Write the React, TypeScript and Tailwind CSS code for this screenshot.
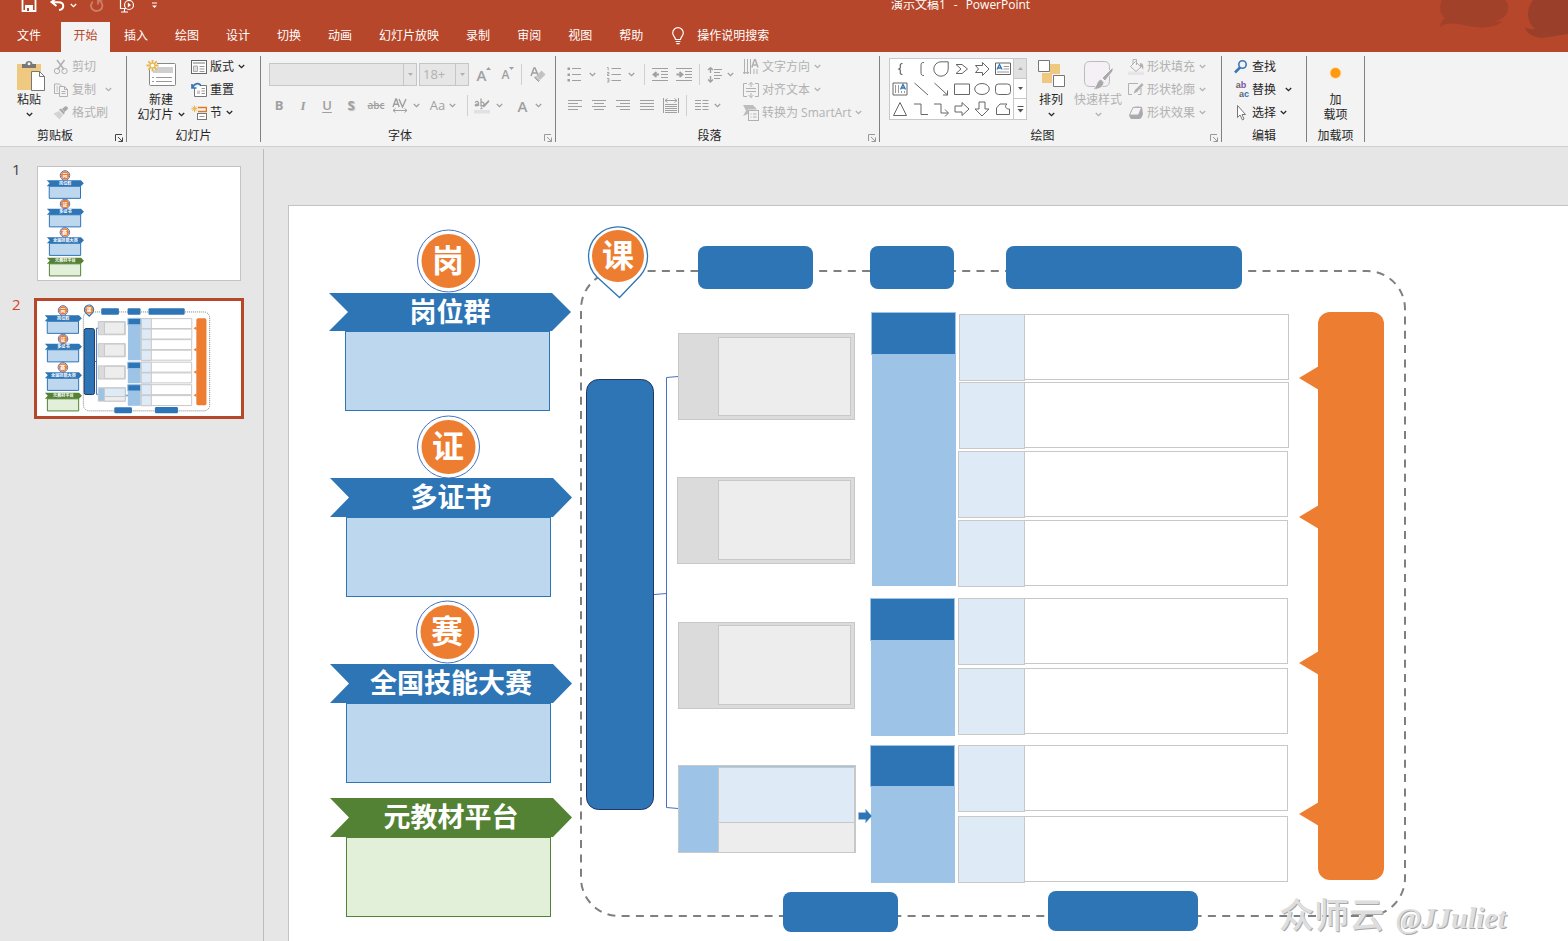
import type { ReactNode } from "react";

type IconProps = { children: ReactNode; size?: string; box?: string; className?: string };

function Icon({ children, size = "w-4 h-4", box = "0 0 16 16", className = "" }: IconProps) {
  return (
    <svg
      viewBox={box}
      className={`${size} shrink-0 ${className}`}
      fill="none"
      stroke="currentColor"
      strokeWidth="1"
      aria-hidden="true"
    >
      {children}
    </svg>
  );
}

function Chevron({ className = "" }: { className?: string }) {
  return (
    <Icon size="w-[7px] h-[7px]" box="0 0 7 7" className={className}>
      <path d="M0.8 2 L3.5 4.7 L6.2 2" strokeWidth="1.3" />
    </Icon>
  );
}

function Caret({ up }: { up?: boolean }) {
  return (
    <Icon size="w-[5px] h-[3px]" box="0 0 5 3">
      <path d={up ? "M0 3 H5 L2.5 0 Z" : "M0 0 H5 L2.5 3 Z"} fill="currentColor" stroke="none" />
    </Icon>
  );
}

const tabs = ["插入", "绘图", "设计", "切换", "动画", "幻灯片放映", "录制", "审阅", "视图", "帮助"];

function Header() {
  return (
    <header className="relative bg-[#b7472a] text-white overflow-hidden">
      <svg className="absolute right-0 top-0 w-[136px] h-[52px]" viewBox="0 0 136 52" aria-hidden="true">
        <path
          d="M10 0 C6 8 9 15 13 18 C10 20 8 23 8 27 C16 21 26 24 36 26 C50 29 66 27 71 21 C68 22 65 22 63 21 C77 19 79 5 73 0 Z"
          fill="#a2412a"
        />
        <path
          d="M101 0 C94 8 94 22 103 29 C99 30 95 28 93 27 C94 33 100 37 110 38 L136 34 L136 0 Z"
          fill="#9a402a"
        />
      </svg>
      <div className="relative flex items-center h-8 -mt-[11px]">
        <div className="flex-1 basis-[890px] flex items-center pl-[21px]">
          <button type="button" aria-label="保存" className="mr-3">
            <Icon>
              <path d="M1.5 1 H13 L14.5 2.5 V14 H1.5 Z" strokeWidth="1.8" />
              <path d="M4 8 H12 V14 H4 Z" fill="currentColor" stroke="none" />
              <path d="M6 11 H8 V14 H6 Z" fill="#b7472a" stroke="none" />
            </Icon>
          </button>
          <button type="button" aria-label="撤消" className="flex items-center gap-[5px] mr-3">
            <Icon>
              <path d="M7 1.5 L2.5 5 L7.5 9 M3 5.3 H9.5 C16 5.5 15.5 12.5 10 13" strokeWidth="2" />
            </Icon>
            <Chevron />
          </button>
          <button type="button" aria-label="恢复" className="mr-[14px] opacity-30">
            <Icon>
              <path d="M3.8 4.5 C-0.5 10 4 14.5 8 13.9 C14.5 13 15 6 10 3.2 M9 7.5 V2.5 H14" strokeWidth="1.8" />
            </Icon>
          </button>
          <button type="button" aria-label="从头开始" className="mr-[16px]">
            <Icon>
              <circle cx="10" cy="8" r="4.5" strokeWidth="1.2" />
              <path d="M8.8 5.6 L12 8 L8.8 10.4 Z" fill="currentColor" stroke="none" />
              <path d="M1.5 2 V11.5 H7 M2 15 H9 M5.5 12 V15" strokeWidth="1.2" />
            </Icon>
          </button>
          <button type="button" aria-label="自定义快速访问工具栏">
            <Icon size="w-[7px] h-[7px]" box="0 0 7 7">
              <path d="M1 1 H6" />
              <path d="M1 3.5 H6 L3.5 6 Z" fill="currentColor" stroke="none" />
            </Icon>
          </button>
        </div>
        <h1 className="flex gap-2 text-xs leading-4 whitespace-nowrap">
          <span>演示文稿1</span>
          <span>-</span>
          <span>PowerPoint</span>
        </h1>
        <div className="flex-1 basis-[537px]" />
      </div>
      <nav className="relative flex items-stretch gap-px h-[31px] pl-1 pt-px text-xs leading-5">
        <button type="button" className="px-[13px] mr-[6px] pb-[2px]">文件</button>
        <button type="button" className="w-[49px] pb-[2px] bg-[#f3f3f3] text-[#b7472a]">开始</button>
        {tabs.map((tab) => (
          <button type="button" key={tab} className="px-[13px] pb-[2px] shrink-0">
            {tab}
          </button>
        ))}
        <button type="button" className="flex items-center gap-3 ml-[14px] pb-[2px]">
          <Icon size="w-[14px] h-[18px]" box="0 0 14 18">
            <path
              d="M4.5 12.5 C4.5 10 1.7 9 1.7 6 A5.3 5.3 0 0 1 12.3 6 C12.3 9 9.5 10 9.5 12.5 Z M4.6 14.5 H9.4 M5.4 16.7 H8.6"
              strokeWidth="1.2"
            />
          </Icon>
          操作说明搜索
        </button>
      </nav>
    </header>
  );
}

type GroupProps = { label: string; width: string; launcher?: string; children: ReactNode };

function Group({ label, width, launcher, children }: GroupProps) {
  return (
    <section className={`relative shrink-0 flex flex-col ${width}`}>
      <div className="h-[69px] flex">{children}</div>
      <h2 className="h-[22px] leading-6 text-center">{label}</h2>
      {launcher && (
        <button type="button" aria-label={`${label}设置`} className={`absolute right-[2px] bottom-[3px] ${launcher}`}>
          <Icon size="w-[10px] h-[10px]" box="0 0 10 10">
            <path d="M8 1.5 H1.5 V8 M4 4 L8.5 8.5 M8.5 4.5 V8.5 H4.5" />
          </Icon>
        </button>
      )}
    </section>
  );
}

function Divider() {
  return <div className="w-px h-[86px] mt-px shrink-0 bg-[#808080]" />;
}

function Bar() {
  return <div className="w-px h-[21px] bg-[#d0d0d0]" />;
}

type SmallProps = { icon: ReactNode; text: string; off?: boolean; arrow?: string };

function SmallButton({ icon, text, off, arrow }: SmallProps) {
  return (
    <button
      type="button"
      disabled={off}
      className={`h-[23px] flex items-center gap-[3px] whitespace-nowrap ${off ? "text-[#b1b1b1]" : "text-[#262626]"}`}
    >
      {icon}
      <span>{text}</span>
      {arrow && <Chevron className={arrow} />}
    </button>
  );
}

function ClipboardGroup() {
  return (
    <Group label="剪贴板" width="w-[126px] pr-4" launcher="text-[#444]">
      <button type="button" className="ml-[13px] w-[32px] h-[69px] flex flex-col items-center leading-[15px]">
        <Icon size="w-[30px] h-8" box="0 0 30 32" className="mt-[5px] ml-[3px]">
          <path d="M1 4 H25 V30 H1 Z" fill="#efc97f" stroke="none" />
          <path d="M6 8 V4 H9.5 C9.5 0 16.5 0 16.5 4 H20 V8 Z" fill="#777" stroke="none" />
          <circle cx="13" cy="3.8" r="1.5" fill="#f3f3f3" stroke="none" />
          <path d="M15.500 11.5 H23.5 L28.5 16.5 V30.5 H15.5 Z" fill="#fff" stroke="#777" />
          <path d="M23.5 11.5 V16.5 H28.5" stroke="#777" />
        </Icon>
        <span className="whitespace-nowrap text-[#262626]">粘贴</span>
        <Chevron className="mt-1" />
      </button>
      <div className="ml-2">
        <SmallButton
          off
          text="剪切"
          icon={
            <Icon>
              <path d="M4 1 L11 10.5 M11.5 1 L4.500 10.5" strokeWidth="1.6" />
              <circle cx="4" cy="12" r="2.7" />
              <circle cx="11.5" cy="12" r="2.7" />
            </Icon>
          }
        />
        <SmallButton
          off
          text="复制"
          arrow="ml-[6px]"
          icon={
            <Icon>
              <path d="M6 11.5 H1.5 V2 H6.5 L8.5 4 M3.5 5 H5 M3.5 7 H5 M3.5 9 H5" />
              <path d="M6.5 4.5 H11.5 L14.5 7.5 V14.5 H6.5 Z M11.5 4.5 V7.5 H14.5 M8.5 9.5 H12.5 M8.5 11.5 H12.5" />
            </Icon>
          }
        />
        <SmallButton
          off
          text="格式刷"
          icon={
            <Icon>
              <path d="M0.5 8.5 L6 6 L10 10 L6.5 14.5 Z" fill="#d5d2d5" stroke="none" />
              <path d="M6 4.5 L8 3.5 L12 8 L10.5 9.5 Z M9 4 L12.5 1 L15 2.5 L14.5 4.5 L11.5 7 Z" fill="#a9a9a9" stroke="none" />
            </Icon>
          }
        />
      </div>
    </Group>
  );
}

function SlidesGroup() {
  return (
    <Group label="幻灯片" width="w-[133px]">
      <button type="button" className="ml-[9px] w-[50px] h-[69px] flex flex-col items-center leading-[15px] text-[#262626]">
        <Icon size="w-8 h-8" box="0 0 32 32" className="mt-[5px]">
          <rect x="4.5" y="3.5" width="26" height="22" rx="1" fill="#fff" stroke="#888" />
          <path d="M8 7 H28 V13 H8 Z" fill="#cfcfcf" stroke="none" />
          <path d="M7 17.5 H9 M11 17.5 H27 M7 21.5 H9 M11 21.5 H27" stroke="#999" />
          <circle cx="7.5" cy="5.500" r="5" fill="#f3f3f3" stroke="none" />
          <path
            d="M7.5 0 V11.500 M1.5 5.5 H13.5 M3.3 1.3 L11.7 9.7 M11.7 1.3 L3.3 9.7"
            stroke="#e9b64d"
            strokeWidth="1.8"
          />
          <circle cx="7.5" cy="5.5" r="1.8" fill="#fff" stroke="none" />
        </Icon>
        <span>新建</span>
        <span className="flex items-center gap-1 whitespace-nowrap">
          幻灯片
          <Chevron />
        </span>
      </button>
      <div className="ml-[5px]">
        <SmallButton
          text="版式"
          arrow="ml-px"
          icon={
            <Icon>
              <rect x="0.5" y="1.5" width="15" height="13" fill="#fff" stroke="#666" />
              <path d="M2 3 H14 V5 H2 Z" fill="#bbb" stroke="none" />
              <path d="M2.5 7 H6.5 V12.5 H2.5 Z" fill="#ddd" stroke="#aaa" />
              <path d="M8.5 7.5 H13.5 M8.5 10 H13.5 M8.5 12.5 H13.5" stroke="#999" />
            </Icon>
          }
        />
        <SmallButton
          text="重置"
          icon={
            <Icon>
              <path d="M3.5 6 V14.5 H15.5 V3.5 H10" fill="#fff" stroke="#777" />
              <path d="M6 8.5 H9 V12 H6 Z" fill="#ccc" stroke="none" />
              <path d="M10.5 6.5 H14 M10.5 9 H14 M10.5 11.5 H14" stroke="#999" />
              <path d="M1 2 V6 H5.5 M1.5 5.5 C4 0.5 8.5 0.5 10 4" stroke="#3a76b5" strokeWidth="1.7" />
            </Icon>
          }
        />
        <SmallButton
          text="节"
          arrow="ml-px"
          icon={
            <Icon>
              <path d="M3.5 0.5 V7 M0.3 3.7 H6.7 M1.3 1.5 L5.7 6 M5.7 1.5 L1.3 6" stroke="#e9b64d" />
              <path d="M7 2.5 H15.5 V6.5 H7" stroke="#dd7a26" strokeWidth="1.5" />
              <rect x="6.5" y="8.5" width="9" height="6" fill="#fff" stroke="#777" />
              <path d="M8.5 11.5 H13.5" stroke="#999" />
            </Icon>
          }
        />
      </div>
    </Group>
  );
}

const toolBtn = "h-6 flex items-center justify-center shrink-0";
const dropArrow =
  "pointer-events-none absolute right-0 inset-y-0 w-[14px] border-l border-[#c6c6c6] flex items-center justify-center text-[#b0b0b0]";

function FontGroup() {
  return (
    <Group label="字体" width="w-[294px] pr-4" launcher="text-[#999]">
      <div className="pt-1 pl-2 text-[13px] text-[#a0a0a0] font-semibold">
        <div className="h-[31px] flex items-center">
          <div className="relative mr-[2px]">
            <select aria-label="字体" disabled className="block appearance-none w-[148px] h-[23px] border border-[#c6c6c6] bg-[#e6e6e6] opacity-100" />
            <span className={dropArrow}>
              <Caret />
            </span>
          </div>
          <div className="relative">
            <select
              aria-label="字号"
              disabled
              className="block appearance-none w-[50px] h-[23px] pl-[3px] border border-[#c6c6c6] bg-[#e6e6e6] text-[#b1b1b1] font-normal text-[13px] opacity-100"
            >
              <option>18+</option>
            </select>
            <span className={dropArrow}>
              <Caret />
            </span>
          </div>
          <button type="button" aria-label="增大字号" className={`${toolBtn} w-6 ml-[3px] text-[15px]`}>
            A
            <Icon size="w-[5px] h-4" box="0 0 5 16">
              <path d="M0 3 H5 L2.5 0 Z" fill="currentColor" stroke="none" />
            </Icon>
          </button>
          <button type="button" aria-label="减小字号" className={`${toolBtn} w-6 text-xs`}>
            A
            <Icon size="w-[5px] h-4" box="0 0 5 16">
              <path d="M0 0 H5 L2.5 3 Z" fill="currentColor" stroke="none" />
            </Icon>
          </button>
          <div className="ml-px mr-2">
            <Bar />
          </div>
          <button type="button" aria-label="清除所有格式" className={`${toolBtn} w-4`}>
            <Icon>
              <path d="M1 9 L4 1 H5 L8 8 M2.3 6 H7" strokeWidth="1.5" />
              <path d="M6 9 L11.5 3.5 L15.5 7.5 L10 13 Z" fill="#c4c1c4" stroke="none" />
              <path d="M4.5 10.5 L8.5 14.5 L9.3 13.7 L5.3 9.7 Z" fill="#c4c1c4" />
            </Icon>
          </button>
        </div>
        <div className="h-[31px] flex items-center">
          <button type="button" className={`${toolBtn} w-6 -ml-[2px] font-bold`}>B</button>
          <button type="button" className={`${toolBtn} w-6 italic`} style={{ fontFamily: "Liberation Serif" }}>I</button>
          <button type="button" className={`${toolBtn} w-6 underline underline-offset-2`}>U</button>
          <button type="button" className={`${toolBtn} w-6 font-bold [text-shadow:1px_1px_1px_#bbb]`}>S</button>
          <button type="button" className={`${toolBtn} w-[26px] line-through text-[10px]`}>abc</button>
          <button type="button" aria-label="字符间距" className={`${toolBtn} w-[34px] gap-[5px]`}>
            <Icon>
              <path d="M1 9 L3.8 1 H4.4 L7.2 9 M2 6.3 H6.2 M7 1 L10.5 9 L14 1" strokeWidth="1.4" />
              <path d="M1 12.5 H15 M3.5 10.5 L1 12.5 L3.5 14.5 M12.5 10.5 L15 12.5 L12.5 14.5" />
            </Icon>
            <Chevron />
          </button>
          <button type="button" className={`${toolBtn} w-10 gap-1 font-medium`}>
            Aa
            <Chevron />
          </button>
          <div className="ml-1 mr-[6px]">
            <Bar />
          </div>
          <button type="button" aria-label="文本突出显示颜色" className={`${toolBtn} gap-[6px]`}>
            <Icon>
              <path d="M0 12 H16 V15.5 H0 Z" fill="#e4dfe6" stroke="none" />
              <path d="M1 4.500 C4 2 5 4 4.500 8 M4.5 5.8 C0 6 0.5 9.5 4.5 7 M7 0.5 V8 C12 8 10 3 7 4.5" strokeWidth="1.300" />
              <path d="M14.5 2 L8.5 8 L10 9.5 L15.5 3.5 Z M7.5 9 L6 11.5 L9 10.5 Z" fill="currentColor" stroke="none" />
            </Icon>
            <Chevron />
          </button>
          <button type="button" aria-label="字体颜色" className={`${toolBtn} w-[30px] ml-3 gap-2 text-[15px]`}>
            A
            <Chevron />
          </button>
        </div>
      </div>
    </Group>
  );
}

function Lines({ d }: { d: string }) {
  return (
    <Icon>
      <path d={d} />
    </Icon>
  );
}

function ParagraphGroup() {
  return (
    <Group label="段落" width="w-[323px] pr-4" launcher="text-[#999]">
      <div className="pt-1 pl-[11px] w-[187px] shrink-0 text-[#a0a0a0]">
        <div className="h-[31px] flex items-center">
          <button type="button" aria-label="项目符号" className={`${toolBtn} gap-[6px] mr-[10px]`}>
            <Icon>
              <path d="M5 1.5 H14 M5 7.5 H14 M5 13.5 H14" />
              <path d="M0.5 0.5 h2.5 v2.5 h-2.5 Z M0.5 6.5 h2.5 v2.5 h-2.5 Z M0.5 12 h2.5 v2.5 h-2.5 Z" fill="currentColor" stroke="none" />
            </Icon>
            <Chevron />
          </button>
          <button type="button" aria-label="编号" className={`${toolBtn} gap-[6px] mr-[9px]`}>
            <Icon>
              <path d="M5.5 1.5 H15 M5.5 7.5 H15 M5.5 13.5 H15" />
              <path d="M1 0.5 H2.2 V3.5 M1 5.5 H3 V7 H1.5 V8.5 H3.5 M1 11.5 H3 V15 H1 M1.5 13.2 H3" strokeWidth="0.9" />
            </Icon>
            <Chevron />
          </button>
          <Bar />
          <button type="button" aria-label="减少缩进" className={`${toolBtn} ml-[7px] mr-2`}>
            <Icon>
              <path d="M0 1.5 H16 M9 4.5 H16 M9 7.5 H16 M9 10.5 H16 M0 13.5 H16" />
              <path d="M1.5 7.5 H7 M4.5 5 L1.5 7.5 L4.5 10" strokeWidth="1.8" />
            </Icon>
          </button>
          <button type="button" aria-label="增加缩进" className={`${toolBtn} mr-[7px]`}>
            <Icon>
              <path d="M0 1.5 H16 M9 4.5 H16 M9 7.5 H16 M9 10.5 H16 M0 13.5 H16" />
              <path d="M0.5 7.5 H6 M3.5 5 L6.5 7.5 L3.5 10" strokeWidth="1.8" />
            </Icon>
          </button>
          <Bar />
          <button type="button" aria-label="行距" className={`${toolBtn} ml-[7px] gap-1`}>
            <Icon>
              <path d="M7 2.5 H15 M7 5.5 H13 M7 8.5 H15 M7 11.5 H13" />
              <path d="M3.5 0.5 V6 M3.5 9 V15 M1 3 L3.5 0.7 L6 3 M1 12.5 L3.5 15 L6 12.5" strokeWidth="1.4" />
            </Icon>
            <Chevron />
          </button>
        </div>
        <div className="h-[31px] flex items-center">
          <div className="flex gap-2 mr-[7px]">
            <button type="button" aria-label="左对齐">
              <Lines d="M1 2.5 H15 M1 5.5 H11 M1 8.5 H15 M1 11.5 H11" />
            </button>
            <button type="button" aria-label="居中">
              <Lines d="M1 2.5 H15 M3 5.5 H13 M1 8.5 H15 M3 11.5 H13" />
            </button>
            <button type="button" aria-label="右对齐">
              <Lines d="M1 2.5 H15 M5 5.5 H15 M1 8.5 H15 M5 11.5 H15" />
            </button>
            <button type="button" aria-label="两端对齐">
              <Lines d="M1 2.5 H15 M1 5.5 H15 M1 8.5 H15 M1 11.5 H15" />
            </button>
            <button type="button" aria-label="分散对齐">
              <Lines d="M0.5 0 V15 M15.5 0 V15 M2 2.5 H14 M4.5 0.5 L2 2.5 L4.5 4.5 M11.5 0.5 L14 2.5 L11.5 4.5 M2 6.5 H14 M2 8.5 H14 M2 10.5 H14 M2 12.5 H14 M2 14.5 H14" />
            </button>
          </div>
          <Bar />
          <button type="button" aria-label="分栏" className={`${toolBtn} ml-[7px] gap-1`}>
            <Lines d="M1 2.5 H7 M1 5.5 H7 M1 8.5 H7 M1 11.5 H7 M8.5 2.5 H14.5 M8.5 5.5 H14.5 M8.5 8.5 H14.5 M8.5 11.5 H14.5" />
            <Chevron />
          </button>
        </div>
      </div>
      <div>
        <SmallButton
          off
          text="文字方向"
          arrow="ml-px"
          icon={
            <Icon>
              <path d="M1.5 0 V15 M4.5 0 V15 M7.500 0 V15 M11 10 V15 M14 10 V15 M0 13 L1.5 15 L3 13 M3 13 L4.5 15 L6 13" />
              <path d="M8.8 8.5 L11.5 0.7 H12.3 L15 8.5 M9.8 6 H14" strokeWidth="1.5" />
            </Icon>
          }
        />
        <SmallButton
          off
          text="对齐文本"
          arrow="ml-px"
          icon={
            <Icon>
              <path d="M4 1.5 H0.5 V14.5 H4 M12 1.5 H15.5 V14.5 H12 M3 6.5 H13 M3 9.5 H13 M8 0.5 V5 M8 11 V15.5 M5.5 3 L8 0.5 L10.5 3 M5.5 13 L8 15.5 L10.5 13" />
            </Icon>
          }
        />
        <SmallButton
          off
          text="转换为 SmartArt"
          arrow="ml-px"
          icon={
            <Icon>
              <path d="M0 0 H10 L14 4.5 H5 V9 L0 11 L3 5.5 Z" fill="#bdbdbd" stroke="none" />
              <rect x="5.5" y="5.5" width="10" height="10" fill="#f3f3f3" />
              <path d="M7.5 9 H8.5 M10 9 H13.5 M7.5 12 H8.5 M10 12 H13.5" />
            </Icon>
          }
        />
      </div>
    </Group>
  );
}

const shapes: { name: string; art: ReactNode }[] = [
  { name: "左大括号", art: <path d="M10.5 2.5 H9.500 L8.300 3.500 V7 L6.800 8 L8.300 9 V12.500 L9.500 13.500 H10.5" strokeWidth="1.2" /> },
  { name: "左中括号", art: <path d="M11 1.5 C8.500 1.5 8 2 8 5 V11 C8 14 8.500 14.5 11 14.5" /> },
  { name: "泪滴形", art: <path d="M8 0.8 H15.2 V8 A7.2 7.2 0 1 1 8 0.8 Z" /> },
  { name: "V 形箭头", art: <path d="M2 3.5 H8 L13.5 8 L8 12.5 H2 L7 8 Z" /> },
  { name: "燕尾箭头", art: <path d="M1.5 4.5 H8.5 V1.5 L15 8 L8.5 14.5 V11.5 H1.5 L4.5 8 Z" /> },
  {
    name: "文本框",
    art: (
      <>
        <path d="M0.5 2 H15.5 V13.5 H0.5 Z" />
        <path d="M2 8.5 L4.5 3.5 L7 8.5 M3 7 H6" stroke="#2e75b6" strokeWidth="1.3" />
        <path d="M8.5 5.5 H14 M8.5 8 H14 M2 11 H14" stroke="#999" />
      </>
    ),
  },
  {
    name: "竖排文本框",
    art: (
      <>
        <path d="M1 2 H15 V14 H1 Z" />
        <path d="M3.5 4 V12 M6.5 4 V12 M9.5 10 V12 M12.5 10 V12" stroke="#999" />
        <path d="M8.5 8.5 L11 3.5 L13.5 8.5 M9.5 7 H12.5" stroke="#2e75b6" strokeWidth="1.3" />
      </>
    ),
  },
  { name: "直线", art: <path d="M1.5 2 L15 14" /> },
  { name: "直线箭头", art: <path d="M1.5 2 L14.5 14 M14.5 9.5 V14 H10" /> },
  { name: "矩形", art: <path d="M0.5 3 H15.5 V13.5 H0.5 Z" /> },
  { name: "椭圆", art: <ellipse cx="8" cy="8" rx="7.3" ry="5.5" /> },
  { name: "圆角矩形", art: <rect x="0.5" y="3" width="15" height="10.5" rx="3" /> },
  { name: "等腰三角形", art: <path d="M8 1.5 L14.5 14.5 H1.5 Z" /> },
  { name: "肘形连接符", art: <path d="M1 3 H8 V13.5 H15" /> },
  { name: "肘形箭头连接符", art: <path d="M1 3 H8 V12 H15 M12 8.5 L15.5 12 L12 15.5" /> },
  { name: "右箭头", art: <path d="M1 5 H8 V1.5 L15 8 L8 14.5 V11 H1 Z" /> },
  { name: "下箭头", art: <path d="M5 1 H11 V8 H15 L8 15 L1 8 H5 Z" /> },
  { name: "任意多边形", art: <path d="M1.5 13.5 V7 L5 3 H12 C9 5 11 8.5 14.5 8 V13.5 Z" /> },
];

function DrawingGroup() {
  return (
    <Group label="绘图" width="w-[341px] pr-4" launcher="text-[#999]">
      <div className="mt-[3px] ml-[9px] h-[62px] flex shrink-0 bg-white border border-[#c8c8c8]">
        <div className="grid grid-cols-6 w-[123px] text-[#666]">
          {shapes.map((shape) => (
            <button type="button" key={shape.name} aria-label={shape.name} className="flex items-center justify-center">
              <Icon>{shape.art}</Icon>
            </button>
          ))}
        </div>
        <div className="w-[13px] grid grid-rows-3 border-l border-[#c8c8c8] divide-y divide-[#c8c8c8] text-[#555]">
          <button type="button" aria-label="上一行" className="flex items-center justify-center bg-[#e1e1e1] text-[#aaa]">
            <Caret up />
          </button>
          <button type="button" aria-label="下一行" className="flex items-center justify-center">
            <Caret />
          </button>
          <button type="button" aria-label="其他形状" className="flex items-center justify-center">
            <Icon size="w-[7px] h-[7px]" box="0 0 7 7">
              <path d="M0.5 0.5 H6.5" />
              <path d="M0.5 3 H6.5 L3.5 6.5 Z" fill="currentColor" stroke="none" />
            </Icon>
          </button>
        </div>
      </div>
      <button type="button" className="ml-2 w-8 h-[69px] shrink-0 flex flex-col items-center leading-[15px] text-[#262626]">
        <Icon size="w-7 h-8" box="0 0 28 32" className="mt-[5px]">
          <path d="M13 4 H23 V14 H13 Z M5 13 H15 V23 H5 Z" fill="#efc97f" stroke="none" />
          <path d="M1.5 0.5 H12.5 V11.5 H1.5 Z M16.5 15.5 H27.5 V26.5 H16.5 Z" fill="#fff" stroke="#777" />
        </Icon>
        <span>排列</span>
        <Chevron className="mt-1" />
      </button>
      <button type="button" disabled className="ml-1 w-[54px] h-[69px] shrink-0 flex flex-col items-center leading-[15px] text-[#b1b1b1]">
        <Icon size="w-8 h-8" box="0 0 32 32" className="mt-[5px]">
          <path d="M2.5 8 C2.5 3 4 1.5 9 1.5 H21 C26 1.5 27.5 3 27.5 8 V20 C27.500 25 26 26.5 21 26.5 H9 C4 26.5 2.5 25 2.5 20 Z" fill="#f4f0f5" stroke="#bbb" />
          <path d="M31 7 L20 18 L23 21 L31 11 Z M19 19 L22 22.5 C21 28 16 30 11 29 C15 27 14 21 19 19 Z" fill="#a9a9a9" stroke="#f3f3f3" />
        </Icon>
        <span className="whitespace-nowrap">快速样式</span>
        <Chevron className="mt-1" />
      </button>
      <div className="ml-[3px]">
        <SmallButton
          off
          text="形状填充"
          arrow="ml-px"
          icon={
            <Icon>
              <path d="M0 12.5 H16 V16 H0 Z" fill="#e8e4ea" stroke="none" />
              <path d="M7.5 2.5 L13 8 L8 12.5 L2.5 7.5 Z M5 5 V0.5 H8.5 V6" />
              <path d="M12 4 C15 4 16 7 15 11 C14 8 13 7.5 12 7 Z" fill="currentColor" stroke="none" />
            </Icon>
          }
        />
        <SmallButton
          off
          text="形状轮廓"
          arrow="ml-px"
          icon={
            <Icon>
              <path d="M10 1.5 H0.5 V12.5 H4 M13 6 V12.5 H10" />
              <path d="M14 1 L7 8 L5.5 11.5 L9 10 L15.5 3 Z" fill="currentColor" stroke="none" />
            </Icon>
          }
        />
        <SmallButton
          off
          text="形状效果"
          arrow="ml-px"
          icon={
            <Icon>
              <path d="M5 2 C8 1 12 1.500 14 2 L15 9 C14 12 13 14 11 14 H3 L1 11 Z" fill="#a9a9a9" stroke="none" />
              <path d="M5 2.5 H13.5 L10.5 10 H1.5 Z" fill="#f7f2f8" />
            </Icon>
          }
        />
      </div>
    </Group>
  );
}

function EditingGroup() {
  return (
    <Group label="编辑" width="w-[84px]">
      <div className="ml-[11px]">
        <SmallButton
          text="查找"
          icon={
            <Icon className="text-[#3a76b5]">
              <circle cx="9.5" cy="5.5" r="3.7" strokeWidth="1.6" />
              <path d="M7 8.5 L2 13.5" strokeWidth="2.5" />
            </Icon>
          }
        />
        <SmallButton
          text="替换"
          arrow="ml-[6px]"
          icon={
            <span
              aria-hidden="true"
              className="w-4 shrink-0 flex flex-col text-[9px] leading-[9px] font-bold text-[#666]"
              style={{ fontFamily: "Liberation Sans" }}
            >
              <span>
                a<span className="text-[#8350a8]">b</span>
              </span>
              <span className="self-end">
                a<span className="text-[#2e75b6]">c</span>
              </span>
            </span>
          }
        />
        <SmallButton
          text="选择"
          arrow="ml-px"
          icon={
            <Icon>
              <path d="M4.5 0.500 V12.5 L7 10 L9.5 15 L11 14 L9 9.5 H12.5 Z" fill="#fff" stroke="#777" />
            </Icon>
          }
        />
      </div>
    </Group>
  );
}

function AddinsGroup() {
  return (
    <Group label="加载项" width="w-[57px]">
      <button type="button" className="w-full h-[69px] flex flex-col items-center leading-[15px] text-[#262626]">
        <Icon size="w-8 h-8" box="0 0 32 32" className="mt-[5px]">
          <circle cx="15.5" cy="13" r="6" fill="#fddfb0" stroke="none" />
          <circle cx="15.5" cy="13" r="5" fill="#ff9a0d" stroke="none" />
        </Icon>
        <span>加</span>
        <span>载项</span>
      </button>
    </Group>
  );
}

function Ribbon() {
  return (
    <div className="flex pt-[3px] h-[95px] overflow-hidden bg-[#f3f3f3] border-b border-[#d0d0d0] text-xs text-[#262626]">
      <ClipboardGroup />
      <Divider />
      <SlidesGroup />
      <Divider />
      <FontGroup />
      <Divider />
      <ParagraphGroup />
      <Divider />
      <DrawingGroup />
      <Divider />
      <EditingGroup />
      <Divider />
      <AddinsGroup />
      <Divider />
    </div>
  );
}

const blue = "#2e75b6";

const topics = [
  { mark: "岗", title: "岗位群", cx: 448, cy: 261, x: 329, y: 293, h: 38 },
  { mark: "证", title: "多证书", cx: 448, cy: 447, x: 330, y: 478, h: 39 },
  { mark: "赛", title: "全国技能大赛", cx: 447, cy: 632, x: 330, y: 664, h: 39 },
  { mark: "", title: "元教材平台", cx: 0, cy: 0, x: 330, y: 798, h: 39 },
];

function Topics() {
  return (
    <g textAnchor="middle" fontWeight="bold" fill="#fff">
      {topics.map(({ mark, title, cx, cy, x, y, h }) => {
        const main = mark ? blue : "#548235";
        return (
          <g key={title}>
            <rect x={x + 16.5} y={y + h + 0.5} width="204" height="79" fill={mark ? "#bdd7ee" : "#e2f0d9"} stroke={main} />
            <path d={`M${x} ${y} h223 l19 ${h / 2} l-19 ${h / 2} h-223 l19 ${-h / 2} Z`} fill={main} />
            <text x={x + 121} y={y + 29} fontSize="27">
              {title}
            </text>
            {mark && (
              <>
                <circle cx={cx + 0.5} cy={cy} r="31" stroke="#4472c4" />
                <circle cx={cx + 0.5} cy={cy} r="27" fill="#ed7d31" />
                <text x={cx} y={cy + 11} fontSize="32">
                  {mark}
                </text>
              </>
            )}
          </g>
        );
      })}
    </g>
  );
}

const pills = [
  [698, 246, 115, 43],
  [870, 246, 84, 43],
  [1006, 246, 236, 43],
  [783, 892, 115, 40],
  [1048, 891, 150, 40],
];

const grayCards = [
  { x: 678, y: 333, top: 4 },
  { x: 677, y: 477, top: 3 },
  { x: 678, y: 622, top: 3 },
];

const columns = [
  { x: 871, y: 312, head: 43, h: 274 },
  { x: 870, y: 598, head: 43, h: 138 },
  { x: 870, y: 745, head: 42, h: 138 },
];

const rows = [
  [959, 314],
  [959, 382],
  [958, 451],
  [958, 520],
  [958, 598],
  [958, 668],
  [958, 745],
  [958, 816],
];

function Course({ dash }: { dash: string }) {
  return (
    <g>
      <rect
        x="581"
        y="271"
        width="824"
        height="645"
        rx="38"
        fill="none"
        stroke="#7f7f7f"
        strokeWidth={dash === "1 1" ? 1 : 2}
        strokeDasharray={dash}
      />
      <path d="M597 277 A29.5 29.5 0 1 1 640 276 L619.5 297.5 Z" fill="#fff" stroke={blue} strokeWidth="1.3" />
      <circle cx="618" cy="256" r="26" fill="#ed7d31" />
      <text x="618" y="267" fontSize="32" fontWeight="bold" fill="#fff" textAnchor="middle">
        课
      </text>
      {pills.map(([x, y, w, h]) => (
        <rect key={x} x={x} y={y} width={w} height={h} rx="8" fill={blue} />
      ))}
      <rect x="586.5" y="379.5" width="67" height="430" rx="12" fill={blue} stroke="#1f3864" />
      <path d="M678 376.5 L666.5 377.5 V807.5 L678 808.5 M654 594.5 L666.5 593.5" fill="none" stroke="#4472c4" />
      {grayCards.map(({ x, y, top }) => (
        <g key={y} stroke="#c8c8c8">
          <rect x={x + 0.5} y={y + 0.5} width={854 - x} height="86" fill="#dbdbdb" />
          <rect x="718.5" y={y + top + 0.5} width="132" height={82 - top} fill="#ededed" />
        </g>
      ))}
      <g stroke="#c8c8c8">
        <rect x="678.5" y="765.5" width="177" height="87" fill="#9dc3e6" />
        <rect x="718.5" y="822.5" width="136" height="30" fill="#ededed" />
        <rect x="718.5" y="767.5" width="136" height="55" fill="#deebf7" />
      </g>
      {columns.map(({ x, y, head, h }) => (
        <g key={y}>
          <rect x={x + 1} y={y + 1} width="84" height={h - 1} fill="#9dc3e6" />
          <rect x={x + 0.5} y={y + 0.5} width="84" height={head - 1} fill={blue} stroke="#9dc3e6" />
        </g>
      ))}
      <path d="M858.5 812.5 H865.5 V809 L872 816 L865.5 823 V819.5 H858.5 Z" fill={blue} stroke="#9dc3e6" strokeWidth="0.6" />
      {rows.map(([x, y]) => (
        <g key={y} stroke="#c8c8c8">
          <rect x={x + 0.5} y={y + 0.5} width="329" height="65" fill="#fff" />
          <rect x={x + 0.5} y={y + 0.5} width={1024 - x} height="66" fill="#deebf7" />
        </g>
      ))}
      <rect x="1318" y="312" width="66" height="568" rx="12" fill="#ed7d31" />
      {[378, 517, 663, 814].map((y) => (
        <path key={y} d={`M1299 ${y} l20 -12 v24 Z`} fill="#ed7d31" />
      ))}
    </g>
  );
}

type SlideProps = { full?: boolean; shift?: number; dash?: string; className: string };

// Both slides share one set of shapes, so the thumbnails are the same drawing scaled down.
function Slide({ full, shift = 0, dash = "8 6.3", className }: SlideProps) {
  return (
    <svg viewBox="289 206 1310 737" className={className}>
      <g transform={`translate(${shift} 0)`}>
        <Topics />
      </g>
      {full && <Course dash={dash} />}
    </svg>
  );
}

const thumb = "block w-[202px] h-[113px] [&_*]:[vector-effect:non-scaling-stroke]";

function Thumbnails() {
  return (
    <aside className="w-[264px] shrink-0 mt-[2px] pt-[17px] border-r border-[#bdbdbd] text-[15px] leading-[18px] text-[#444]">
      <ol>
        <li className="flex items-start pl-3">
          <span className="w-[25px] -mt-[6px]">1</span>
          <button type="button" aria-label="幻灯片 1" className="bg-white border border-[#c3c3c3]">
            <Slide shift={13} className={thumb} />
          </button>
        </li>
        <li className="flex items-start pl-3 mt-[17px]">
          <span className="w-[22px] -mt-[3px] text-[#d04727]">2</span>
          <button type="button" aria-label="幻灯片 2" className="bg-white border-3 border-[#b7472a] p-px">
            <Slide full dash="1 1" className={thumb} />
          </button>
        </li>
      </ol>
    </aside>
  );
}

export default function App() {
  return (
    <div
      className="h-screen flex flex-col overflow-hidden bg-[#e6e6e6]"
      style={{ fontFamily: '"Open Sans", "Noto Sans CJK SC", sans-serif' }}
    >
      <Header />
      <Ribbon />
      <div className="flex-1 min-h-0 flex">
        <Thumbnails />
        <main className="relative flex-1 min-w-0 overflow-hidden pl-6 pt-[58px]">
          <Slide full className="block w-[1312px] h-[739px] max-w-none bg-white border border-[#c3c3c3]" />
          <p className="absolute right-[62px] bottom-0 flex items-baseline gap-3 text-[35px] leading-[46px] whitespace-nowrap font-medium text-[#dedede] [text-shadow:1px_1px_0_#a8a8a8]">
            <span>众师云</span>
            <span className="italic font-bold text-[30px]" style={{ fontFamily: "Liberation Serif" }}>
              @JJuliet
            </span>
          </p>
        </main>
      </div>
    </div>
  );
}
